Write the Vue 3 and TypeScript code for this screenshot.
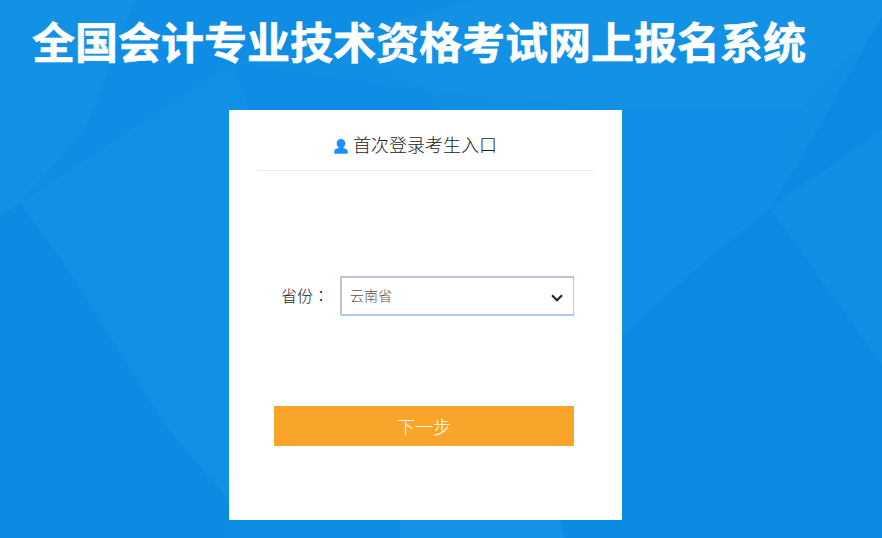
<script setup lang="ts">
import { ref } from 'vue'

const province = ref('云南省')
const provinces = ['云南省', '四川省', '贵州省', '广东省']

// background facets, drawn lightest over a flat blue
const facets: { points: string; fill: string }[] = [
  { points: '0,0 135,0 85,130 20,203 0,215', fill: '#1391e5' },
  { points: '135,0 85,130 20,203 233,63 330,40 470,0', fill: '#0f8de4' },
  { points: '20,203 233,63 250,110 229,110 229,500 167,428 67,268', fill: '#1191e5' },
  { points: '0,215 20,203 67,268 167,428 229,500 229,538 0,538', fill: '#0c8be3' },
  { points: '233,63 430,92 440,110 250,110', fill: '#0e8de4' },
  { points: '470,0 882,0 882,17 800,110 622,110 430,92 330,40', fill: '#1291e5' },
  { points: '622,110 800,110 770,208 697,268 622,335', fill: '#0f8fe5' },
  { points: '882,17 882,130 770,208 800,160', fill: '#0b8ae3' },
  { points: '770,208 882,130 882,365 813,268', fill: '#108fe5' },
  { points: '770,208 813,268 882,365 882,538 622,538 622,335 697,268', fill: '#0b8ae3' },
  { points: '229,520 400,520 400,538 229,538', fill: '#0e8de4' },
  { points: '400,520 560,520 565,538 400,538', fill: '#1493e7' },
  { points: '560,520 622,520 622,538 565,538', fill: '#0c8be3' },
]
</script>

<template>
  <div class="page">
    <svg class="backdrop" viewBox="0 0 882 538" width="882" height="538" aria-hidden="true">
      <polygon v-for="facet in facets" :key="facet.points" :points="facet.points" :fill="facet.fill" />
    </svg>

    <h1 class="title">全国会计专业技术资格考试网上报名系统</h1>

    <section class="card">
      <header class="card-head">
        <svg class="user-icon" viewBox="0 0 14 16" width="14" height="16" aria-hidden="true">
          <path
            d="M7 1c2.600 0 4.300 1.700 4.300 4.200 0 1.800-.8 3.200-1.800 4-.2.200-.2.600.1.800l2.800 1.300c.8.400 1.300 1.100 1.300 2v2.400H.3v-2.400c0-.9.500-1.600 1.300-2L4.400 10c.3-.2.300-.6.100-.8-1-.8-1.800-2.200-1.800-4C2.700 2.700 4.400 1 7 1z"
            fill="#1e90f5"
          />
        </svg>
        <span>首次登录考生入口</span>
      </header>

      <div class="field">
        <label for="province" class="field-label">省份<span class="colon">：</span></label>
        <div class="select-wrap">
          <select id="province" v-model="province">
            <option v-for="p in provinces" :key="p" :value="p">{{ p }}</option>
          </select>
          <svg class="chevron" viewBox="0 0 12 8" width="12" height="8" aria-hidden="true">
            <path d="M1 1.300l5 5 5-5" fill="none" stroke="#222" stroke-width="2" />
          </svg>
        </div>
      </div>

      <button type="button" class="next">下一步</button>
    </section>
  </div>
</template>

<style>
html,
body {
  margin: 0;
  background: #0f8ee4;
}
</style>

<style scoped>
.page {
  position: relative;
  width: 882px;
  height: 538px;
  overflow: hidden;
  background: #108fe5;
  font-family: "Noto Sans CJK SC", "Liberation Sans", sans-serif;
}

.backdrop {
  position: absolute;
  inset: 0;
}

.title {
  position: relative;
  margin: 0;
  padding: 9px 0 0 32px;
  height: 110px;
  box-sizing: border-box;
  font-size: 43px;
  line-height: 62px;
  font-weight: 700;
  color: #fff;
  white-space: nowrap;
  -webkit-text-stroke: 0.6px #fff;
}

.card {
  position: relative;
  box-sizing: border-box;
  width: 393px;
  height: 410px;
  margin-left: 229px;
  padding: 0 29px;
  background: #fff;
  color: #222;
}

.card-head {
  display: flex;
  align-items: center;
  justify-content: center;
  gap: 5px;
  height: 61px;
  padding: 8px 20px 0 0;
  box-sizing: border-box;
  border-bottom: 1px solid #e8e8e8;
  font-size: 18px;
  font-weight: 300;
}

.user-icon {
  margin-top: 3px;
}

.field {
  display: flex;
  align-items: center;
  margin-top: 105px;
  padding-left: 23px;
}

.field-label {
  width: 59px;
  flex-shrink: 0;
  padding-bottom: 2px;
  font-size: 16px;
  font-weight: 300;
}

.colon {
  font-family: "Noto Sans CJK TC", sans-serif;
}

.select-wrap {
  position: relative;
  width: 234px;
  height: 40px;
}

select {
  display: block;
  box-sizing: border-box;
  width: 100%;
  height: 100%;
  padding: 0 30px 2px 9px;
  appearance: none;
  background: #fff;
  border: 1px solid #c4c4c4;
  border-bottom-color: #aec8f4;
  box-shadow: inset 0 1px 0 #aec8f4, inset 1px 0 0 #aec8f4, inset 0 -1px 0 #aec8f4;
  border-radius: 0;
  outline: none;
  font-family: inherit;
  font-size: 14px;
  font-weight: 300;
  color: #555;
}

.chevron {
  position: absolute;
  right: 11px;
  top: 18px;
  pointer-events: none;
}

.next {
  display: block;
  width: 300px;
  height: 40px;
  margin: 90px 0 0 16px;
  padding: 0;
  border: 0;
  background: #f9a52a;
  color: #fff;
  font-family: inherit;
  font-size: 18px;
  font-weight: 300;
}
</style>
